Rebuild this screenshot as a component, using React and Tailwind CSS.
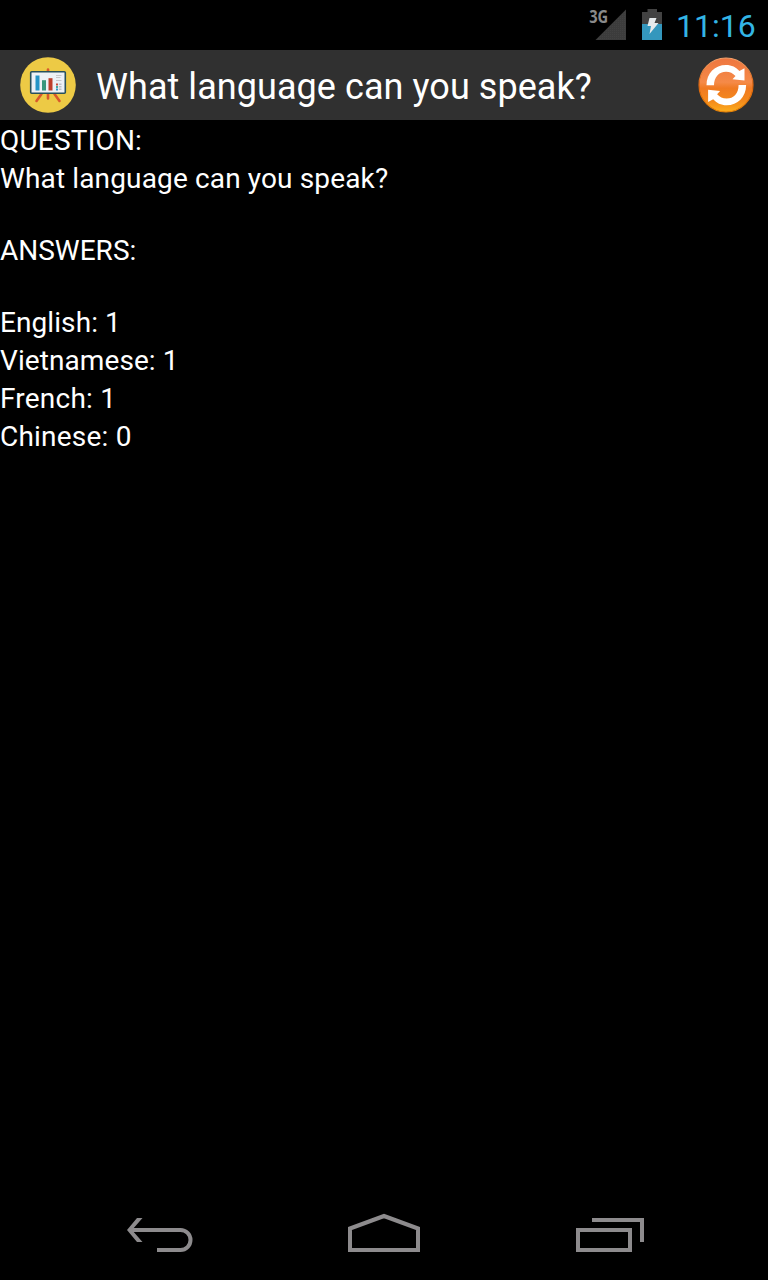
function SignalIcon() {
  return (
    <svg className="h-[50px] w-[40px]" viewBox="588 0 40 50">
      <defs>
        <pattern id="dots" width="2" height="2" patternUnits="userSpaceOnUse">
          <rect width="2" height="2" fill="#3c3c3c" />
          <rect width="1" height="1" fill="#424242" />
        </pattern>
      </defs>
      <path d="M626 9.5V40H595.5Z" fill="url(#dots)" />
      <text x="589.2" y="22.8" fill="#8a8a8a" fontFamily="'Open Sans', sans-serif" fontWeight="700" fontSize="17.5" textLength="19" lengthAdjust="spacingAndGlyphs">3G</text>
    </svg>
  );
}

function BatteryIcon() {
  return (
    <svg className="h-[50px] w-[20px]" viewBox="642 0 20 50">
      <path d="M647.5 9h9.500v3h5v12h-20V12h5.500z" fill="#424242" />
      <path d="M642 24h20v16h-20z" fill="#3497bd" />
      <path d="M649.500 18h7l-2 5h4l-9 11 1.500-8h-3.500z" fill="#e6eaec" />
    </svg>
  );
}

function AppIcon() {
  return (
    <svg className="h-[56px] w-[56px]" viewBox="20 57 56 56">
      <circle cx="48" cy="85" r="27.800" fill="#edca45" />
      <path d="M48 69.500v29M41.500 94l-5 7M54.500 94l5 7" stroke="#d8582c" strokeWidth="2.600" strokeLinecap="round" />
      <rect x="30.700" y="71.700" width="34.600" height="21.600" rx="1" fill="#edf1f6" stroke="#28515c" strokeWidth="1.600" />
      <path d="M35.500 75.500h4V90.500h-4z" fill="#2594c6" />
      <path d="M42 80.200h4V90.500h-4z" fill="#37967d" />
      <path d="M48.500 78.200h4V90.500h-4z" fill="#bd3e2b" />
      <path d="M56 75.500h5.500M56 77.500h4.500M56 80.500h5.500" stroke="#c6c7ca" />
      <path d="M58.800 84.300h2.700M58.800 86.800h2.700M58.800 89.300h2.700" stroke="#bfc2c5" strokeWidth="1.400" />
      <path d="M56 83.500h2v2h-2z" fill="#c94b39" />
      <path d="M56 86h2v2h-2z" fill="#42aaa0" />
      <path d="M56 88.500h2v2h-2z" fill="#2d95c5" />
    </svg>
  );
}

function RefreshIcon() {
  return (
    <svg className="h-[56px] w-[56px]" viewBox="698 57 56 56">
      <defs>
        <linearGradient id="orb" x1="0" y1="0" x2="0" y2="1">
          <stop offset="0" stopColor="#ee7640" />
          <stop offset="0.450" stopColor="#f58a48" />
          <stop offset="0.560" stopColor="#f07a22" />
          <stop offset="0.800" stopColor="#f48a1c" />
          <stop offset="1" stopColor="#fcae1c" />
        </linearGradient>
        <linearGradient id="rim" x1="0" y1="0" x2="0" y2="1">
          <stop offset="0" stopColor="#f4a06b" />
          <stop offset="0.500" stopColor="#dc640f" />
          <stop offset="1" stopColor="#e78207" />
        </linearGradient>
      </defs>
      <circle cx="726" cy="85" r="27" fill="url(#orb)" stroke="url(#rim)" strokeWidth="1.200" />
      <g fill="#fff">
        <path d="M706.500 85.300C706.500 73 715 65 726 65c5.800 0 10 2.200 13.400 6L744.500 68.300V80.500L732.500 79.300l3-3.300c-2.700-2.800-5.500-4.300-9.500-4.300-7 0-12 5.300-12 13.600z" />
        <path transform="rotate(180 726.300 85.100)" d="M706.500 85.300C706.500 73 715 65 726 65c5.800 0 10 2.200 13.400 6L744.500 68.300V80.500L732.500 79.300l3-3.300c-2.700-2.800-5.500-4.300-9.500-4.300-7 0-12 5.300-12 13.600z" />
      </g>
    </svg>
  );
}

const answers = [
  ["English", 1, "tracking-[0.080px]"],
  ["Vietnamese", 1, "tracking-[0.080px]"],
  ["French", 1, "tracking-[0.220px]"],
  ["Chinese", 0, "tracking-[0.220px]"],
];

export default function App() {
  return (
    <div className="flex h-[1280px] w-[768px] flex-col overflow-hidden bg-black font-['Roboto',sans-serif] text-white">
      <div className="flex h-[50px] shrink-0 items-center justify-end pr-[12px]">
        <SignalIcon />
        <div className="ml-[14px] flex"><BatteryIcon /></div>
        <span className="ml-[14px] w-[80px] whitespace-nowrap pt-[2px] text-[32px] leading-[48px] text-[#33b5e5]">11:16</span>
      </div>
      <header className="flex h-[70px] shrink-0 items-center bg-[#303030] pl-[20px] pr-[14px]">
        <AppIcon />
        <h1 className="ml-[20px] flex-1 whitespace-nowrap pt-[4px] text-[36px] leading-[48px] tracking-[0.060px]">What language can you speak?</h1>
        <RefreshIcon />
      </header>
      <main className="flex-1 pt-[2px] text-[28px] leading-[38px]">
        <p className="tracking-[0.200px]">QUESTION:</p>
        <p className="tracking-[0.140px]">What language can you speak?</p>
        <p className="mt-[34px]">ANSWERS:</p>
        <div className="mt-[34px]">
          {answers.map(([name, count, tracking]) => (
            <p key={name} className={tracking}>{name}: {count}</p>
          ))}
        </div>
      </main>
      <nav className="flex h-[90px] shrink-0 items-center justify-between pl-[110px] pr-[108px]">
        <svg className="h-[70px] w-[100px]" viewBox="0 0 100 70" fill="none" stroke="#8d8b8d" strokeWidth="4">
          <path d="M47 50h23.500a10 10 0 0 0 0-20H20" />
          <path d="M17 30L27 18h5.500L22 30l10.500 12H27z" fill="#8d8b8d" stroke="none" />
        </svg>
        <svg className="mr-[2px] h-[70px] w-[100px]" viewBox="0 0 100 70" fill="none" stroke="#8d8b8d" strokeWidth="4">
          <path d="M16 50V28.500L50 16l34 12.500V50z" />
        </svg>
        <svg className="h-[70px] w-[100px]" viewBox="0 0 100 70" fill="none" stroke="#8d8b8d" strokeWidth="4">
          <path d="M18 30h52v20H18zM32 20h50v22" />
        </svg>
      </nav>
    </div>
  );
}
